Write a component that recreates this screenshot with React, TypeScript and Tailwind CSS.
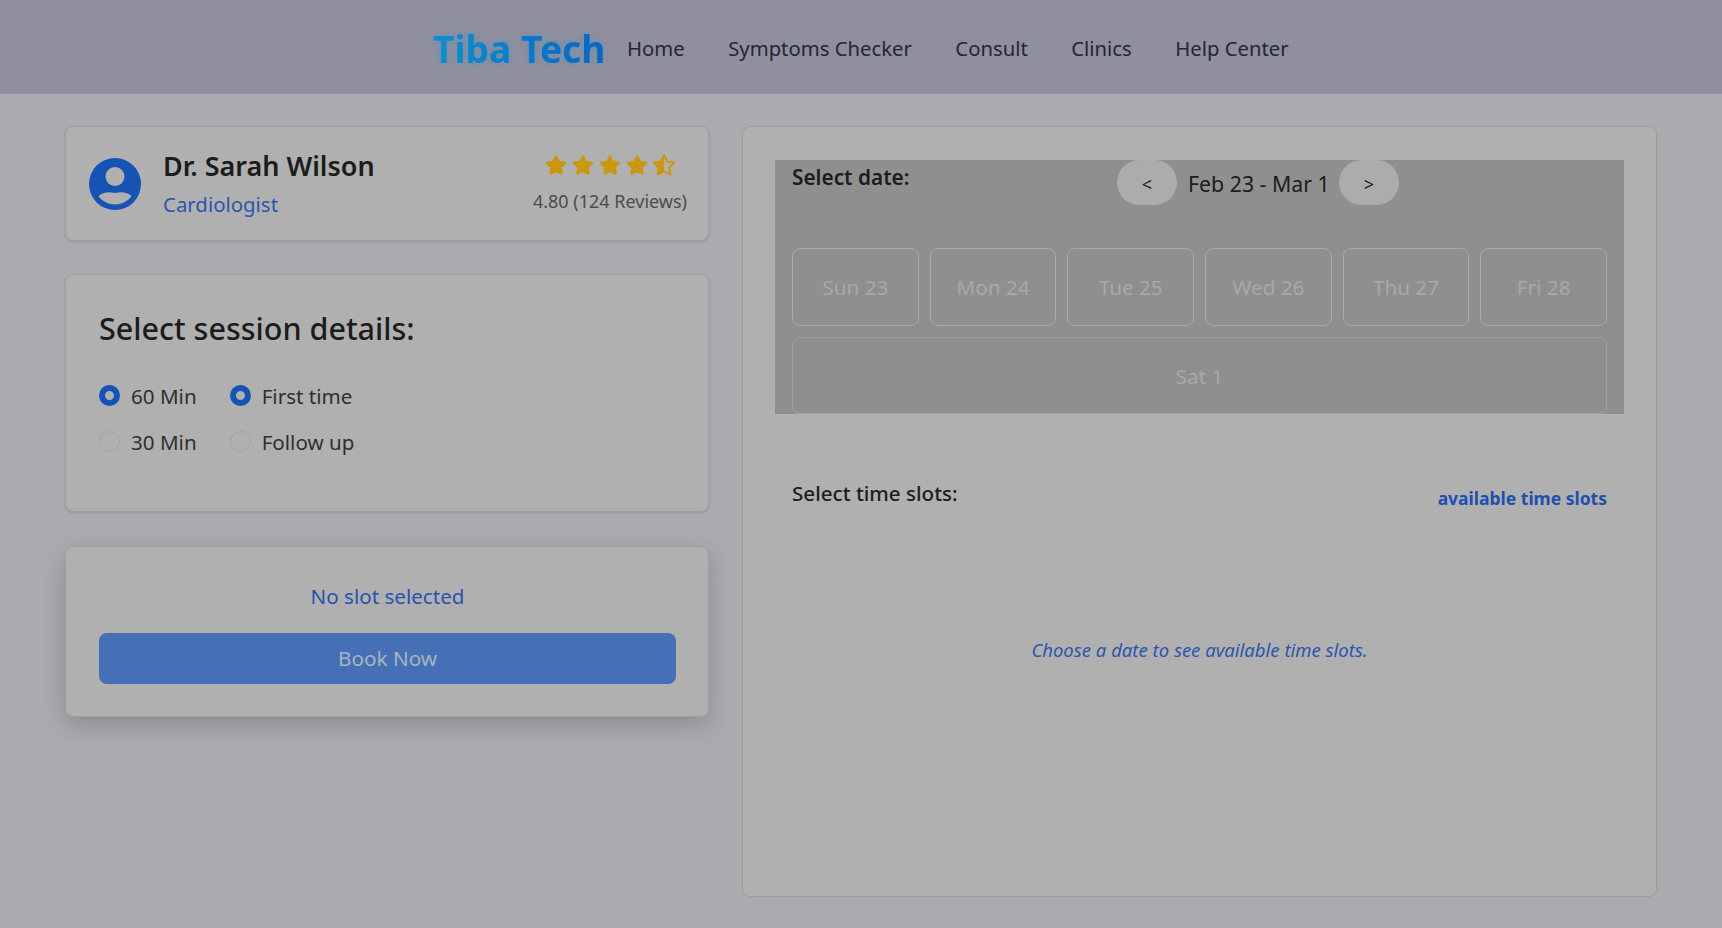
import { FaStar, FaStarHalfAlt } from "react-icons/fa";

const navLinks = ["Home", "Symptoms Checker", "Consult", "Clinics", "Help Center"];
const days = ["Sun 23", "Mon 24", "Tue 25", "Wed 26", "Thu 27", "Fri 28"];

function Radio({ label, checked }: { label: string; checked?: boolean }) {
  return (
    <label className="flex items-center gap-[11px] h-[21px]">
      {checked ? (
        <span className="w-[21px] h-[21px] rounded-full border-[6px] border-[#1553b5] -mt-[2px]" />
      ) : (
        <span className="w-[21px] h-[21px] rounded-full border border-[#a3a3a3] -mt-[2px]" />
      )}
      <span className="text-[20.6px] text-[#2f2f2f]">{label}</span>
    </label>
  );
}

function Avatar() {
  return (
    <svg viewBox="0 0 52 52" className="w-[52px] h-[52px] shrink-0">
      <circle cx="26" cy="26" r="26" fill="#1553b5" />
      <circle cx="26" cy="18.5" r="9.5" fill="#b0b0b0" />
      <path
        d="M9.5 38C14 34 20 33.5 26 35C32 33.5 38 34 42.5 38C39 43.5 32 46.5 26 46.5C20 46.5 13 43.5 9.5 38Z"
        fill="#b0b0b0"
      />
    </svg>
  );
}

export default function App() {
  return (
    <div className="min-h-[928px] bg-[#a9abae] font-['Noto_Sans',sans-serif] text-[#1c1c1c]">
      <nav className="h-[94px] bg-[#8f8f9f] flex items-center pl-[433px] pt-[3px]">
        <div className="text-[37.2px] font-bold leading-none bg-gradient-to-r from-[#0e8fcd] to-[#0b60c2] bg-clip-text text-transparent w-[194px] drop-shadow-[0_0_4px_rgba(14,143,205,0.3)]">
          Tiba Tech
        </div>
        <ul className="flex gap-[43.5px]">
          {navLinks.map((link) => (
            <li key={link} className="text-[20.3px] text-[#262630]">
              {link}
            </li>
          ))}
        </ul>
      </nav>

      <div className="flex gap-[33px] pl-[65px] pt-[32px]">
        <div className="w-[644px] flex flex-col gap-[33px]">
          <div className="h-[115px] bg-[#b0b0b0] border border-[#9f9f9f] rounded-[8px] shadow-sm flex items-center pl-[23px] pr-[21px]">
            <Avatar />
            <div className="ml-[22px] pt-[1px]">
              <div className="text-[27px] font-semibold leading-[36px] mb-[3px]">Dr. Sarah Wilson</div>
              <div className="text-[20.4px] text-[#2c56ad] leading-[34px]">Cardiologist</div>
            </div>
            <div className="ml-auto flex flex-col items-end pt-[2px]">
              <div className="flex gap-[5px] text-[#cb970c] text-[22px] pr-[12px]">
                <FaStar />
                <FaStar />
                <FaStar />
                <FaStar />
                <FaStarHalfAlt />
              </div>
              <div className="text-[18px] text-[#4c4c4c] mt-[12px]">4.80 (124 Reviews)</div>
            </div>
          </div>

          <div className="h-[238px] bg-[#b0b0b0] border border-[#9f9f9f] rounded-[8px] shadow-sm pl-[33px] pt-[31px]">
            <h2 className="text-[30.5px] font-medium leading-[44px]">Select session details:</h2>
            <div className="flex gap-[33px] mt-[36px]">
              <div className="flex flex-col gap-[25px]">
                <Radio label="60 Min" checked />
                <Radio label="30 Min" />
              </div>
              <div className="flex flex-col gap-[25px]">
                <Radio label="First time" checked />
                <Radio label="Follow up" />
              </div>
            </div>
          </div>

          <div className="h-[171px] mt-[1px] bg-[#b0b0b0] border border-[#9f9f9f] rounded-[8px] shadow-[0_8px_24px_rgba(0,0,0,0.18)] pl-[33px] pr-[32px] pt-[34px]">
            <div className="text-center text-[20.6px] text-[#2a52ad] leading-[30px]">No slot selected</div>
            <button className="mt-[22px] w-full h-[51px] bg-[#4570b5] rounded-[8px] text-[20.7px] text-[#a9b3c0]">
              Book Now
            </button>
          </div>
        </div>

        <div className="w-[915px] h-[771px] bg-[#b0b0b0] border border-[#9c9c9c] rounded-[8px] pl-[32px] pr-[32px] pt-[33px]">
          <div className="h-[254px] bg-[#8f8f8f] px-[17px]">
            <div className="relative h-[88px]">
              <div className="absolute left-0 top-[2px] text-[20.8px] font-semibold">Select date:</div>
              <div className="absolute left-[325px] top-0 flex items-center gap-[11px]">
                <button className="w-[60px] h-[45px] rounded-full bg-[#abacae] text-[18px] text-[#1c1c1c] pt-[4px]">&lt;</button>
                <span className="text-[21.3px] w-[140px] text-center whitespace-nowrap pt-[2px]">Feb 23 - Mar 1</span>
                <button className="w-[60px] h-[45px] rounded-full bg-[#abacae] text-[18px] text-[#1c1c1c] pt-[4px]">&gt;</button>
              </div>
            </div>
            <div className="grid grid-cols-6 gap-[11px]">
              {days.map((d) => (
                <div
                  key={d}
                  className="h-[78px] border border-[#a8a8a8] rounded-[8px] flex items-center justify-center text-[20.7px] text-[#a8a8a8] pt-[2px]"
                >
                  {d}
                </div>
              ))}
              <div className="col-span-6 h-[77px] border border-[#a0a0a0] rounded-[8px] flex items-center justify-center text-[20.7px] text-[#a8a8a8] pt-[2px]">
                Sat 1
              </div>
            </div>
          </div>
          <div className="flex justify-between items-start px-[17px] mt-[64px]">
            <div className="text-[20.6px] font-medium">Select time slots:</div>
            <div className="text-[17.5px] font-bold text-[#1d4fae] mt-[7px]">available time slots</div>
          </div>
          <div className="text-center italic text-[18.5px] text-[#2c56ad] mt-[125px]">
            Choose a date to see available time slots.
          </div>
        </div>
      </div>
    </div>
  );
}
